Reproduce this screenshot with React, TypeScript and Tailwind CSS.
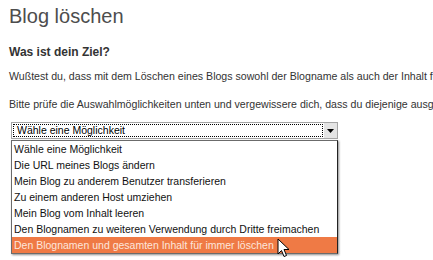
const options = [
  "Wähle eine Möglichkeit",
  "Die URL meines Blogs ändern",
  "Mein Blog zu anderem Benutzer transferieren",
  "Zu einem anderen Host umziehen",
  "Mein Blog vom Inhalt leeren",
  "Den Blognamen zu weiteren Verwendung durch Dritte freimachen",
  "Den Blognamen und gesamten Inhalt für immer löschen",
];

const Cursor = () => (
  <svg
    width="14"
    height="20"
    viewBox="0 0 14 20"
    className="absolute left-[266px] top-[116px]"
  >
    <path
      d="M1 1 L1 16 L4.5 12.5 L7 18.5 L9.5 17.5 L7 11.5 L12 11.5 Z"
      fill="white"
      stroke="black"
      strokeWidth="1"
      strokeLinejoin="miter"
    />
  </svg>
);

const App = () => {
  return (
    <div className="h-[260px] w-[433px] overflow-hidden bg-white pl-[9px] font-['Liberation_Sans',Arial,sans-serif] text-[#333]">
      <h1 className="mt-[6px] whitespace-nowrap text-[20px] leading-[20px] text-[#4d4d4d]">
        Blog löschen
      </h1>
      <h2 className="mt-[20px] whitespace-nowrap text-[12px] leading-[12px] font-bold text-[#333]">
        Was ist dein Ziel?
      </h2>
      <p className="mt-[12px] whitespace-nowrap text-[10.6px] leading-[12px] text-[#333]">
        Wußtest du, dass mit dem Löschen eines Blogs sowohl der Blogname als
        auch der Inhalt für immer gelöscht werden?
      </p>
      <p className="mt-[16px] whitespace-nowrap text-[10.6px] leading-[12px] text-[#333]">
        Bitte prüfe die Auswahlmöglichkeiten unten und vergewissere dich, dass
        du diejenige ausgewählt hast, die du wirklich möchtest.
      </p>

      <div className="relative ml-[2px] mt-[12px] w-[327px]">
        <div className="flex h-[17px] border border-[#a5a5a5] bg-white">
          <div className="m-[1px] flex flex-1 items-center border border-dotted border-black pl-[3px] text-[10.5px] text-black">
            Wähle eine Möglichkeit
          </div>
          <div className="flex w-[13px] items-center justify-center bg-[#e4e4e4]">
            <svg width="7" height="4" viewBox="0 0 7 4">
              <path d="M0 0 L7 0 L3.5 4 Z" fill="black" />
            </svg>
          </div>
        </div>

        <ul className="mt-[1px] border border-[#6b6b6b] border-r-[#222] bg-white shadow-[1px_1px_2px_rgba(0,0,0,0.45)]">
          {options.map((o, i) => (
            <li
              key={o}
              className={
                i === options.length - 1
                  ? "h-[16px] whitespace-nowrap bg-[#ef7a45] pl-[2px] text-[10.5px] leading-[16px] text-[#fde6dc]"
                  : "h-[16px] whitespace-nowrap pl-[2px] text-[10.5px] leading-[16px] text-[#111]"
              }
            >
              {o}
            </li>
          ))}
        </ul>
        <Cursor />
      </div>
    </div>
  );
};

export default App;
